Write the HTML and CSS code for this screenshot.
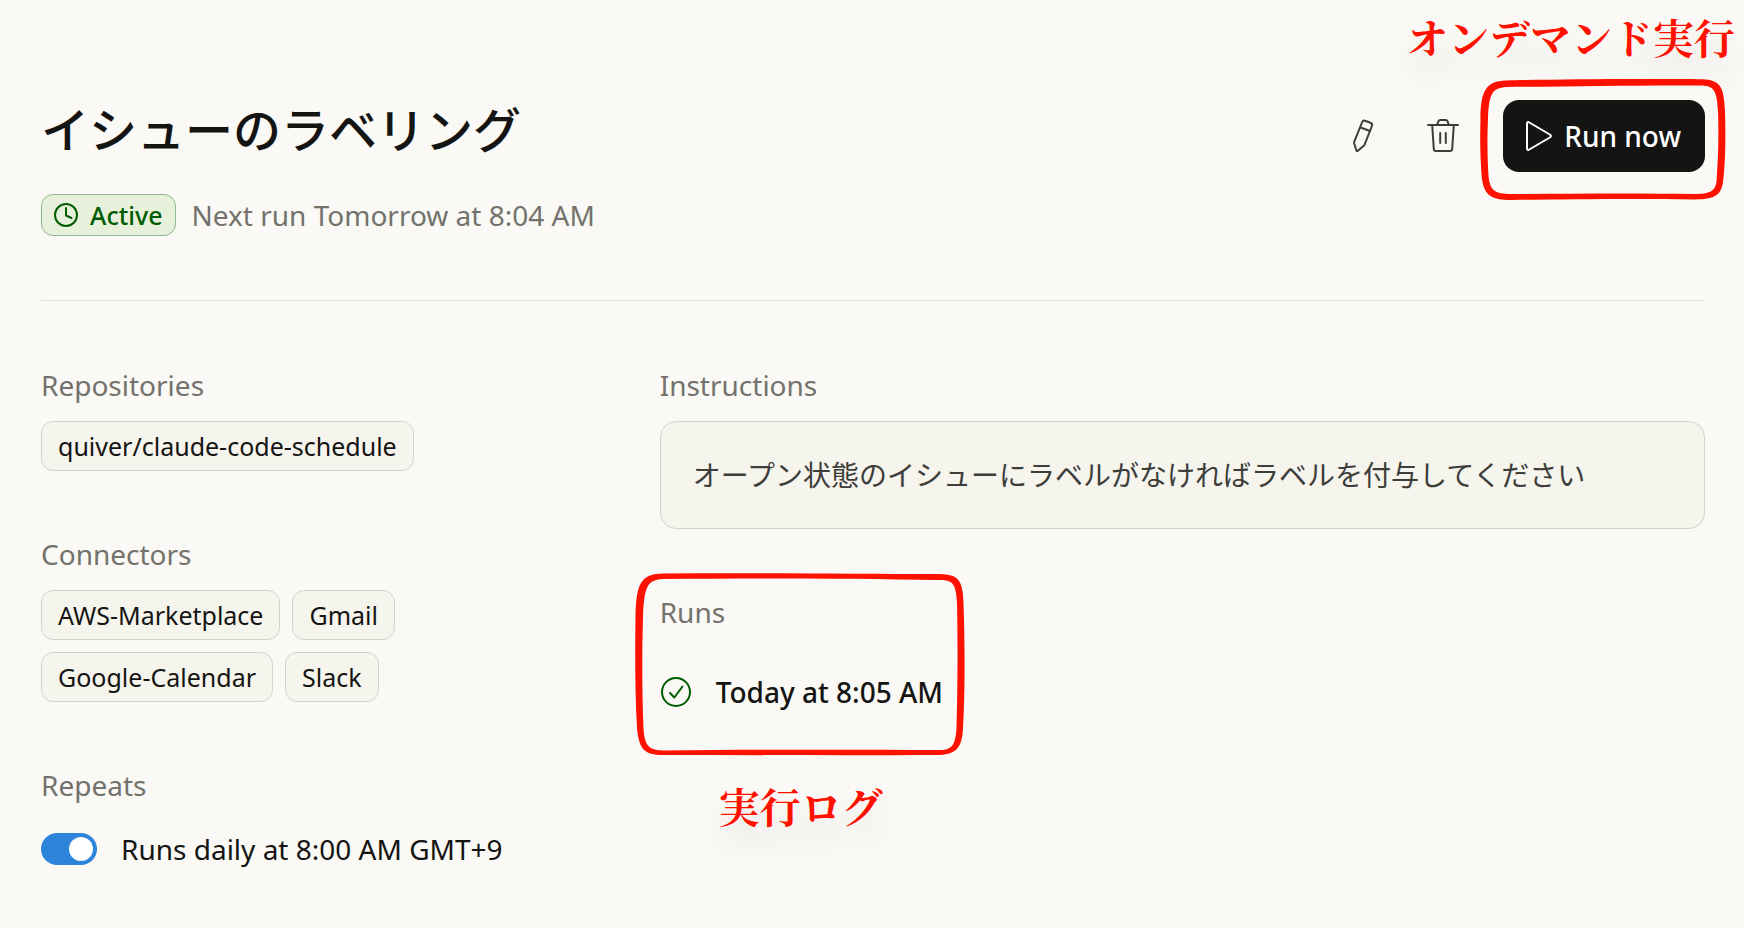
FILE: index.html
```html
<!DOCTYPE html>
<html lang="ja">
<head>
  <meta charset="UTF-8" />
  <meta name="viewport" content="width=device-width, initial-scale=1.0" />
  <title>イシューのラベリング</title>
  <link rel="stylesheet" href="styles.css">
</head>
<body>
  <main class="page">
    <header class="header">
      <div class="heading">
        <h1>イシューのラベリング</h1>
        <div class="status">
          <span class="badge">
            <svg class="badge-icon" viewBox="0 0 26 26" aria-hidden="true">
              <circle cx="13" cy="13" r="11" />
              <path d="M13 6v7.500l5.500 2.500" />
            </svg>
            Active
          </span>
          <span class="next-run">Next run Tomorrow at 8:04 AM</span>
        </div>
      </div>

      <div class="actions">
        <div class="icon-buttons">
          <button class="icon-button" type="button" aria-label="Edit">
            <svg viewBox="0 0 36 36" aria-hidden="true">
              <path d="M17 4.500q.8-2.400 3-1.700l5.400 2q2.300.9 1.500 3.200L19.300 27.300l-6.400 5.500q-1.200.9-1.600-.5L9.200 25.500q-.2-1 .1-1.800z" />
              <path d="M15.500 9.500l9.700 3.500" />
            </svg>
          </button>
          <button class="icon-button" type="button" aria-label="Delete">
            <svg viewBox="0 0 36 36" aria-hidden="true">
              <path d="M3 7h30M12.300 6.500l.9-2.700q.6-1.800 2.300-1.800h5q1.700 0 2.300 1.800l.9 2.700M7.200 7l1.600 24q.1 2 2.200 2h14q2.100 0 2.200-2L28.800 7M15.200 15v10M20.800 15v10" />
            </svg>
          </button>
        </div>
        <div class="run-action">
          <button class="run-button" type="button">
            <svg viewBox="0 0 28 32" aria-hidden="true">
              <path d="M3 3.800v24.400q0 2.600 2.300 1.300l20.500-12q2.200-1.500 0-3L5.300 2.500q-2.300-1.300-2.300 1.300z" />
            </svg>
            Run now
          </button>
          <svg class="frame frame-run" viewBox="0 0 246 122" aria-hidden="true">
            <path d="M.5 40C.5 12 6 2 26 1.500C80 0 190-.3 222 .2C240 1 244 7 245 32C246 60 245 90 243 103C241 117 234 120 215 120.500C150 119.500 80 120.500 32 121C10 121 3 116 1.500 95C0 70 0 60 .5 40zM8 40C7 60 7.500 80 8.500 97C10 111 14 115 32 115C90 114.500 160 114 215 115C230 115 235 112 236.500 103C238 80 239 60 238 32C237 12 234 7 222 6.500C160 6 90 7.500 26 8C12 9 9 15 8 40z" />
          </svg>
          <span class="note note-run">オンデマンド実行</span>
        </div>
      </div>
    </header>

    <div class="columns">
      <div class="column">
        <section class="section">
          <h2>Repositories</h2>
          <div class="chips">
            <span class="chip">quiver/claude-code-schedule</span>
          </div>
        </section>
        <section class="section">
          <h2>Connectors</h2>
          <div class="chips">
            <span class="chip">AWS-Marketplace</span>
            <span class="chip">Gmail</span>
            <span class="chip">Google-Calendar</span>
            <span class="chip">Slack</span>
          </div>
        </section>
        <section class="section">
          <h2>Repeats</h2>
          <label class="repeat">
            <input class="toggle" type="checkbox" role="switch" checked>
            Runs daily at 8:00 AM GMT+9
          </label>
        </section>
      </div>

      <div class="column">
        <section class="section">
          <h2>Instructions</h2>
          <p class="instructions">オープン状態のイシューにラベルがなければラベルを付与してください</p>
        </section>
        <section class="section runs">
          <h2>Runs</h2>
          <div class="run-row">
            <svg class="run-icon" viewBox="0 0 32 32" aria-hidden="true">
              <circle cx="16" cy="16" r="14" />
              <path d="M10 17l4.300 4.500L22.500 10.500" />
            </svg>
            Today at 8:05 AM
          </div>
          <svg class="frame frame-runs" viewBox="0 0 330 183" aria-hidden="true">
            <path d="M.5 45C1 10 6 1 28 .5C120-.5 220 1 305 1C323 1.500 328 7 328.500 30C330 75 330 120 328 155C327 174 322 181 305 182C210 182.500 120 182 28 182C9 182 4 176 2 155C0 120 0 80 .5 45zM8 45C7 80 7 120 8.500 155C9.500 173 14 177 28 177.500C120 176.500 220 176.500 305 177C317 177 320.500 172 321.500 155C322.500 120 323 75 322 30C321 11 318 7 305 7C220 5.500 120 5 28 6C13 7 9 12 8 45z" />
          </svg>
          <span class="note note-runs">実行ログ</span>
        </section>
      </div>
    </div>
  </main>
</body>
</html>
```
FILE: styles.css
```css
* {
  box-sizing: border-box;
}

body {
  margin: 0;
  background: #faf9f5;
  color: #141413;
  font-family: "Noto Sans", "Noto Sans CJK JP", sans-serif;
  font-size: 28px;
  line-height: 40px;
}

h1, h2, p {
  margin: 0;
}

h1 {
  font-size: 48px;
  font-weight: 500;
  line-height: 60px;
}

h2 {
  color: #73726c;
  font-size: 28px;
  font-weight: 400;
  line-height: 39px;
}

svg {
  fill: none;
  stroke: currentColor;
  stroke-width: 2;
  stroke-linecap: round;
  stroke-linejoin: round;
}

.page {
  padding: 100px 39px 48px 41px;
}

.header {
  display: flex;
  justify-content: space-between;
  align-items: flex-start;
  padding-bottom: 64px;
  border-bottom: 1px solid #dedcd5;
}

.heading {
  display: flex;
  flex-direction: column;
  gap: 34px;
}

.status {
  display: flex;
  align-items: center;
  gap: 16px;
  color: #73726c;
}

.badge {
  display: flex;
  align-items: center;
  gap: 11px;
  height: 42px;
  padding: 0 12px 0 11px;
  border: 1px solid #8fb98a;
  border-radius: 12px;
  background: #e7f0da;
  color: #005c00;
  font-size: 25px;
  font-weight: 500;
}

.badge-icon {
  width: 26px;
  height: 26px;
}

.actions {
  display: flex;
  gap: 24px;
}

.icon-buttons {
  display: flex;
  gap: 8px;
}

.icon-button {
  display: flex;
  align-items: center;
  justify-content: center;
  width: 72px;
  height: 72px;
  padding: 0;
  border: none;
  background: none;
  color: #3d3d3a;
  cursor: pointer;
}

.icon-button svg {
  width: 36px;
  height: 36px;
}

.run-action {
  position: relative;
}

.run-button {
  display: flex;
  align-items: center;
  gap: 12px;
  height: 72px;
  padding: 0 24px 0 21px;
  border: none;
  border-radius: 16px;
  background: #141413;
  color: #fff;
  font: inherit;
  font-weight: 500;
  white-space: nowrap;
  cursor: pointer;
}

.run-button svg {
  width: 28px;
  height: 32px;
}

.columns {
  display: grid;
  grid-template-columns: 1fr 2fr;
  gap: 96px;
  padding-top: 65px;
}

.column {
  display: flex;
  flex-direction: column;
  gap: 64px;
  min-width: 0;
}

.section {
  display: flex;
  flex-direction: column;
  gap: 16px;
}

.chips {
  display: flex;
  flex-wrap: wrap;
  gap: 12px;
  max-width: 400px;
}

.chip {
  padding: 4px 16px;
  border: 1px solid #d3d2cb;
  border-radius: 12px;
  background: #f5f4ed;
  font-size: 25px;
}

.repeat {
  display: flex;
  align-items: center;
  gap: 24px;
  padding: 8px 0;
}

.toggle {
  appearance: none;
  flex: none;
  width: 56px;
  height: 32px;
  margin: 0;
  padding: 4px;
  border-radius: 16px;
  background: #2c84db;
  cursor: pointer;
}

.toggle::before {
  content: "";
  display: block;
  width: 24px;
  height: 24px;
  border-radius: 50%;
  background: #fff;
}

.toggle:checked::before {
  margin-left: auto;
}

.instructions {
  padding: 33px 32px;
  border: 1px solid #d3d2cb;
  border-radius: 16px;
  background: #f5f4ed;
  color: #3d3d3a;
}

.runs {
  position: relative;
}

.run-row {
  display: flex;
  align-items: center;
  gap: 24px;
  padding: 24px 0;
  font-weight: 500;
}

.run-icon {
  width: 32px;
  height: 32px;
  color: #005c00;
}

/* red markup on top of the page */
.frame {
  position: absolute;
  fill: #ff1100;
  stroke: none;
  pointer-events: none;
}

.frame-run {
  top: -21px;
  right: -21px;
  width: 246px;
  height: 122px;
}

.frame-runs {
  top: -20px;
  left: -25px;
  width: 330px;
  height: 183px;
}

.note {
  position: absolute;
  color: #ff1100;
  font-family: "Noto Serif CJK JP", "Noto Sans CJK JP", serif;
  font-size: 41px;
  font-weight: 700;
  line-height: 56px;
  white-space: nowrap;
  text-shadow: 0 20px 32px rgba(0, 0, 0, 0.12);
}

.note-run {
  right: -30px;
  bottom: 107px;
}

.note-runs {
  top: 185px;
  left: 59px;
}
```
